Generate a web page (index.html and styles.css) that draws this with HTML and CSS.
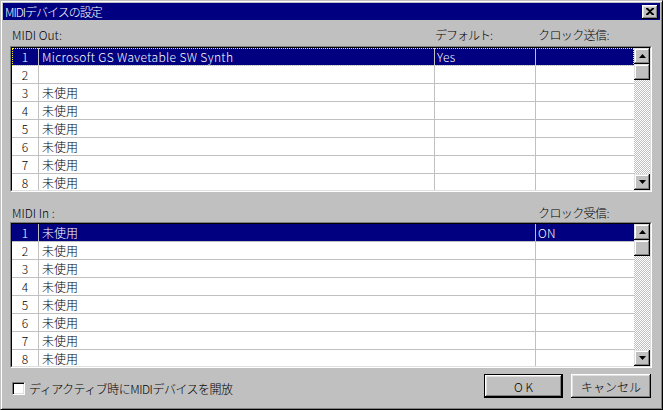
FILE: index.html
```html
<!DOCTYPE html>
<html lang="ja">
<head>
<meta charset="utf-8">
<link rel="stylesheet" href="styles.css">
</head>
<body>
<div class="window">
  <div class="titlebar">
    <span class="title">MIDIデバイスの設定</span>
    <div class="closebtn">
      <svg width="8" height="7" viewBox="0 0 8 7"><path d="M0 0h2l2 2 2-2h2v1L5 3.5 8 6v1H6L4 5 2 7H0V6l3-2.5L0 1z" fill="#000"/></svg>
    </div>
  </div>
  <div class="content">
    <div class="hdr hdr1">
      <span class="h-name">MIDI Out:</span>
      <span class="h-def">デフォルト:</span>
      <span class="h-clk">クロック送信:</span>
    </div>
    <div class="listbox">
      <div class="listbox-inner">
        <div class="rows">
          <div class="row sel focus"><div class="c num">1</div><div class="c name lat">Microsoft GS Wavetable SW Synth</div><div class="c def lat">Yes</div><div class="c last"></div></div>
          <div class="row"><div class="c num">2</div><div class="c name"></div><div class="c def"></div><div class="c last"></div></div>
          <div class="row"><div class="c num">3</div><div class="c name">未使用</div><div class="c def"></div><div class="c last"></div></div>
          <div class="row"><div class="c num">4</div><div class="c name">未使用</div><div class="c def"></div><div class="c last"></div></div>
          <div class="row"><div class="c num">5</div><div class="c name">未使用</div><div class="c def"></div><div class="c last"></div></div>
          <div class="row"><div class="c num">6</div><div class="c name">未使用</div><div class="c def"></div><div class="c last"></div></div>
          <div class="row"><div class="c num">7</div><div class="c name">未使用</div><div class="c def"></div><div class="c last"></div></div>
          <div class="row"><div class="c num">8</div><div class="c name">未使用</div><div class="c def"></div><div class="c last"></div></div>
        </div>
        <div class="sb">
          <div class="sbbtn"><svg width="7" height="4" viewBox="0 0 7 4"><path d="M3.5 0L7 4H0z" fill="#000"/></svg></div>
          <div class="sbthumb"></div>
          <div class="sbtrack"></div>
          <div class="sbbtn"><svg width="7" height="4" viewBox="0 0 7 4"><path d="M0 0h7L3.5 4z" fill="#000"/></svg></div>
        </div>
      </div>
    </div>
    <div class="hdr hdr2">
      <span class="h-name2">MIDI In :</span>
      <span class="h-clk">クロック受信:</span>
    </div>
    <div class="listbox">
      <div class="listbox-inner">
        <div class="rows">
          <div class="row sel"><div class="c num">1</div><div class="c name2">未使用</div><div class="c last lat">ON</div></div>
          <div class="row"><div class="c num">2</div><div class="c name2">未使用</div><div class="c last"></div></div>
          <div class="row"><div class="c num">3</div><div class="c name2">未使用</div><div class="c last"></div></div>
          <div class="row"><div class="c num">4</div><div class="c name2">未使用</div><div class="c last"></div></div>
          <div class="row"><div class="c num">5</div><div class="c name2">未使用</div><div class="c last"></div></div>
          <div class="row"><div class="c num">6</div><div class="c name2">未使用</div><div class="c last"></div></div>
          <div class="row"><div class="c num">7</div><div class="c name2">未使用</div><div class="c last"></div></div>
          <div class="row"><div class="c num">8</div><div class="c name2">未使用</div><div class="c last"></div></div>
        </div>
        <div class="sb">
          <div class="sbbtn"><svg width="7" height="4" viewBox="0 0 7 4"><path d="M3.5 0L7 4H0z" fill="#000"/></svg></div>
          <div class="sbthumb"></div>
          <div class="sbtrack"></div>
          <div class="sbbtn"><svg width="7" height="4" viewBox="0 0 7 4"><path d="M0 0h7L3.5 4z" fill="#000"/></svg></div>
        </div>
      </div>
    </div>
    <div class="bottom">
      <label class="chk"><span class="box"></span><span class="chklabel">ディアクティブ時にMIDIデバイスを開放</span></label>
      <div class="btns">
        <div class="btn default"><span class="ok">OK</span></div>
        <div class="btn">キャンセル</div>
      </div>
    </div>
  </div>
</div>
</body>
</html>
```

FILE: styles.css
```css
* { box-sizing: border-box; }
html, body { margin: 0; padding: 0; }
body {
  width: 663px;
  height: 410px;
  background: #c0c0c0;
  font-family: "Noto Sans CJK JP", "DejaVu Sans", sans-serif;
  font-size: 12px;
  font-weight: 300;
  color: #000;
  overflow: hidden;
}
.window {
  width: 663px;
  height: 410px;
  border: 1px solid;
  border-color: #c0c0c0 #000 #000 #c0c0c0;
  box-shadow: inset 1px 1px #fff, inset -1px -1px #808080;
  padding: 2px;
  display: flex;
  flex-direction: column;
}
.titlebar {
  height: 17px;
  background: #000080;
  display: flex;
  align-items: center;
  justify-content: space-between;
  padding-left: 2px;
  padding-right: 2px;
}
.title {
  color: #fff;
  font-size: 12px;
  line-height: 17px;
  letter-spacing: -1px;
}
.closebtn {
  width: 16px;
  height: 14px;
  background: #c0c0c0;
  box-shadow: inset -1px -1px #000, inset 1px 1px #fff, inset -2px -2px #808080, inset 2px 2px #dfdfdf;
  display: flex;
  align-items: center;
  justify-content: center;
  padding-bottom: 1px;
}
.content {
  flex: 1;
  padding: 0 8px 0 7px;
  display: flex;
  flex-direction: column;
}
.hdr {
  display: flex;
  line-height: 13px;
}
.hdr1 { height: 26px; padding-top: 8px; }
.hdr2 { height: 30px; padding-top: 14px; }
.h-name { width: 425px; padding-left: 2px; }
.h-name2 { width: 528px; padding-left: 2px; }
.h-def { width: 103px; letter-spacing: -1px; }
.h-clk { letter-spacing: -0.6px; }
.listbox {
  height: 146px;
  border: 1px solid;
  border-color: #808080 #fff #fff #808080;
}
.listbox-inner {
  height: 100%;
  border: 1px solid;
  border-color: #000 #dfdfdf #dfdfdf #000;
  background: #fff;
  display: flex;
  overflow: hidden;
}
.rows {
  flex: 1;
  overflow: hidden;
}
.row {
  height: 18px;
  display: flex;
  border-bottom: 1px solid #c0c0c0;
}
.row.sel {
  background: #000080;
  color: #fff;
}
.row.focus {
  outline: 1px dotted #ffff00;
  outline-offset: -1px;
}
.c {
  line-height: 17px;
  border-right: 1px solid #c0c0c0;
  white-space: nowrap;
  overflow: hidden;
}
.num { width: 27px; text-align: center; }
.name { width: 396px; padding-left: 3px; }
.name2 { width: 497px; padding-left: 3px; }
.def { width: 101px; padding-left: 2px; }
.last { flex: 1; border-right: none; padding-left: 2px; }
.lat { letter-spacing: 0.35px; }
.sb {
  width: 16px;
  display: flex;
  flex-direction: column;
}
.sbbtn, .sbthumb {
  height: 16px;
  background: #c0c0c0;
  box-shadow: inset -1px -1px #000, inset 1px 1px #dfdfdf, inset -2px -2px #808080, inset 2px 2px #fff;
  display: flex;
  align-items: center;
  justify-content: center;
}
.sbtrack {
  flex: 1;
  background-color: #fff;
  background-image: conic-gradient(#c0c0c0 25%, #fff 0 50%, #c0c0c0 0 75%, #fff 0);
  background-size: 2px 2px;
}
.bottom {
  display: flex;
  justify-content: space-between;
  margin-top: 6px;
}
.chk {
  display: flex;
  align-items: center;
  padding-left: 2px;
  padding-top: 4px;
}
.box {
  width: 13px;
  height: 13px;
  background: #fff;
  border: 1px solid;
  border-color: #808080 #fff #fff #808080;
  box-shadow: inset 1px 1px #000, inset -1px -1px #dfdfdf;
}
.chklabel { margin-left: 4px; line-height: 13px; letter-spacing: -0.5px; }
.btns {
  display: flex;
  gap: 8px;
  padding-right: 1px;
}
.btn {
  width: 80px;
  height: 24px;
  background: #c0c0c0;
  box-shadow: inset -1px -1px #000, inset 1px 1px #fff, inset -2px -2px #808080, inset 2px 2px #dfdfdf;
  display: flex;
  align-items: center;
  justify-content: center;
  line-height: 13px;
}
.btn.default {
  width: 79px;
  border: 1px solid #000;
}
.ok { letter-spacing: 3px; margin-right: -3px; }
```
